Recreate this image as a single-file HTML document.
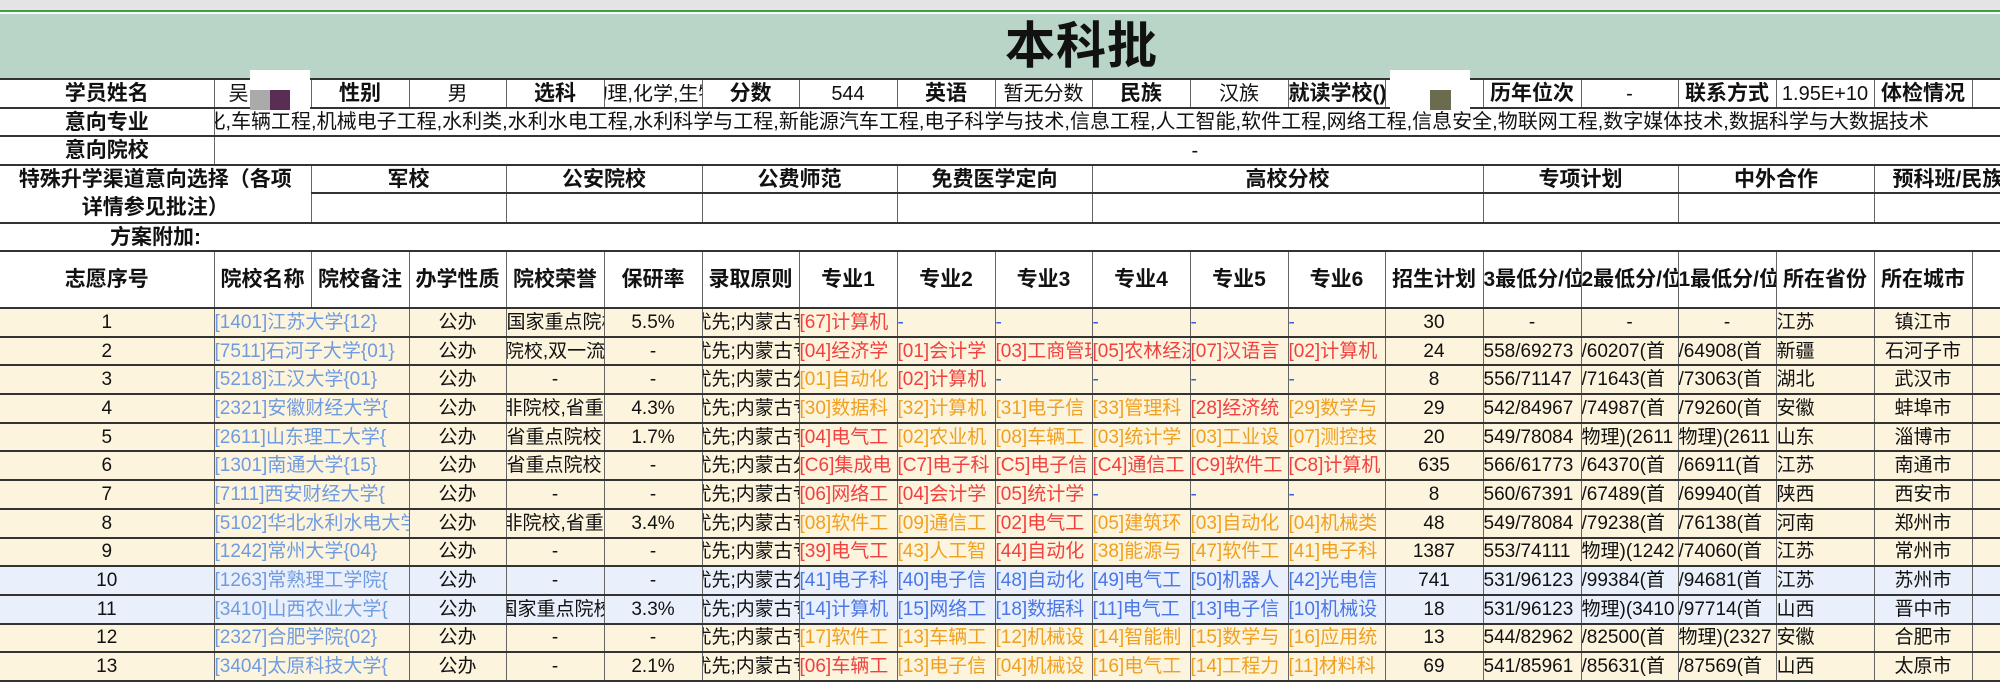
<!DOCTYPE html>
<html><head><meta charset="utf-8"><style>
*{margin:0;padding:0;box-sizing:border-box}
body{width:2000px;height:673px;overflow:hidden;background:#fff;font-family:"Liberation Sans","Noto Sans CJK SC",sans-serif;position:relative;line-height:1}
.colhdr{position:absolute;left:0;top:0;width:2000px;height:12px;background:#e4e4e4;border-bottom:2px solid #3fa046}
table{position:absolute;left:0;top:14px;border-collapse:collapse;table-layout:fixed;width:2030px}
td{border-right:1px solid #666;border-bottom:2px solid #333;white-space:nowrap;overflow:hidden;font-size:20px;line-height:1;text-align:center;color:#111;padding:0;vertical-align:middle}
td.b{font-weight:bold;font-size:21px}
.c{display:flex;justify-content:center;overflow:hidden}
.title{background:#b9d5c8;position:relative;border-bottom:2px solid #333}
tr.d td{height:28.7px;font-size:19px;background:#fdf4dd}
tr.bl td{background:#e9f0fc}
.nm{color:#6f9be0;text-align:left}
.r{color:#f04040;text-align:left}
.o{color:#f0a020;text-align:left}
.u{color:#4a76e6;text-align:left}
.dash{color:#2e5fe0;text-align:left}
.t{text-align:left}
</style></head><body>
<div class="colhdr"></div>
<table>
<colgroup><col style="width:214px">
<col style="width:97px"><col style="width:98px"><col style="width:97px"><col style="width:98px"><col style="width:98px"><col style="width:97px"><col style="width:98px"><col style="width:98px"><col style="width:97px"><col style="width:98px"><col style="width:98px"><col style="width:97px"><col style="width:98px"><col style="width:98px"><col style="width:97px"><col style="width:98px"><col style="width:98px"><col style="width:98px">
<col style="width:58px"></colgroup>
<tr><td colspan="20" class="title" style="height:65px;border-right:none"><span style="position:absolute;left:1005px;top:7px;font-size:50px;font-weight:bold;letter-spacing:1px">本科批</span></td></tr>
<tr style="height:29px"><td class="b">学员姓名</td><td style="text-align:left;padding-left:14px">吴</td><td class="b">性别</td><td>男</td><td class="b">选科</td><td><div class="c">物理,化学,生物</div></td><td class="b">分数</td><td>544</td><td class="b">英语</td><td>暂无分数</td><td class="b">民族</td><td>汉族</td><td class="b t">就读学校()</td><td></td><td class="b">历年位次</td><td>-</td><td class="b">联系方式</td><td>1.95E+10</td><td class="b">体检情况</td><td style="border-right:none"></td></tr>
<tr style="height:28px"><td class="b">意向专业</td><td colspan="19" style="text-align:left;overflow:hidden;border-right:none"><div style="margin-left:-9px">化,车辆工程,机械电子工程,水利类,水利水电工程,水利科学与工程,新能源汽车工程,电子科学与技术,信息工程,人工智能,软件工程,网络工程,信息安全,物联网工程,数字媒体技术,数据科学与大数据技术</div></td></tr>
<tr style="height:29px"><td class="b">意向院校</td><td colspan="19" style="border-right:none;text-align:left;padding-left:977px">-</td></tr>
<tr style="height:28px"><td colspan="2" rowspan="2" class="b" style="line-height:28px;text-align:center">特殊升学渠道意向选择（各项<br>详情参见批注）</td><td colspan="2" class="b">军校</td><td colspan="2" class="b">公安院校</td><td colspan="2" class="b">公费师范</td><td colspan="2" class="b">免费医学定向</td><td colspan="4" class="b">高校分校</td><td colspan="2" class="b">专项计划</td><td colspan="2" class="b">中外合作</td><td colspan="2" class="b t" style="padding-left:18px;border-right:none">预科班/民族班</td></tr>
<tr style="height:29px"><td colspan="2"></td><td colspan="2"></td><td colspan="2"></td><td colspan="2"></td><td colspan="4"></td><td colspan="2"></td><td colspan="2"></td><td colspan="2" style="border-right:none"></td></tr>
<tr style="height:28px"><td colspan="2" class="b" style="border-right:none">方案附加:</td><td colspan="18" style="border-right:none"></td></tr>
<tr style="height:57px"><td class="b">志愿序号</td><td class="b">院校名称</td><td class="b">院校备注</td><td class="b">办学性质</td><td class="b">院校荣誉</td><td class="b">保研率</td><td class="b">录取原则</td><td class="b">专业1</td><td class="b">专业2</td><td class="b">专业3</td><td class="b">专业4</td><td class="b">专业5</td><td class="b">专业6</td><td class="b">招生计划</td><td class="b t">3最低分/位次</td><td class="b t">2最低分/位次</td><td class="b t">1最低分/位次</td><td class="b">所在省份</td><td class="b">所在城市</td><td style="border-right:none"></td></tr>

<tr class="d"><td>1</td><td colspan="2" class="nm">[1401]江苏大学{12}</td><td>公办</td><td class="t">国家重点院校</td><td>5.5%</td><td class="t"><div style="margin-left:-10px">优先;内蒙古专项</div></td><td class="r">[67]计算机</td><td class="dash">-</td><td class="dash">-</td><td class="dash">-</td><td class="dash">-</td><td class="dash">-</td><td>30</td><td>-</td><td>-</td><td>-</td><td class="t">江苏</td><td>镇江市</td><td style="border-right:none"></td></tr>
<tr class="d"><td>2</td><td colspan="2" class="nm">[7511]石河子大学{01}</td><td>公办</td><td><div class="c">院校,双一流</div></td><td>-</td><td class="t"><div style="margin-left:-10px">优先;内蒙古专项</div></td><td class="r">[04]经济学</td><td class="r">[01]会计学</td><td class="r">[03]工商管理</td><td class="r">[05]农林经济</td><td class="r">[07]汉语言</td><td class="r">[02]计算机</td><td>24</td><td class="t">558/69273</td><td class="t">/60207(首</td><td class="t">/64908(首</td><td class="t">新疆</td><td>石河子市</td><td style="border-right:none"></td></tr>
<tr class="d"><td>3</td><td colspan="2" class="nm">[5218]江汉大学{01}</td><td>公办</td><td>-</td><td>-</td><td class="t"><div style="margin-left:-10px">优先;内蒙古分</div></td><td class="o">[01]自动化</td><td class="r">[02]计算机</td><td class="dash">-</td><td class="dash">-</td><td class="dash">-</td><td class="dash">-</td><td>8</td><td class="t">556/71147</td><td class="t">/71643(首</td><td class="t">/73063(首</td><td class="t">湖北</td><td>武汉市</td><td style="border-right:none"></td></tr>
<tr class="d"><td>4</td><td colspan="2" class="nm">[2321]安徽财经大学{</td><td>公办</td><td class="t"><div style="margin-left:-3px">非院校,省重点</div></td><td>4.3%</td><td class="t"><div style="margin-left:-10px">优先;内蒙古专项</div></td><td class="o">[30]数据科</td><td class="o">[32]计算机</td><td class="o">[31]电子信</td><td class="o">[33]管理科</td><td class="r">[28]经济统</td><td class="o">[29]数学与</td><td>29</td><td class="t">542/84967</td><td class="t">/74987(首</td><td class="t">/79260(首</td><td class="t">安徽</td><td>蚌埠市</td><td style="border-right:none"></td></tr>
<tr class="d"><td>5</td><td colspan="2" class="nm">[2611]山东理工大学{</td><td>公办</td><td class="t">省重点院校</td><td>1.7%</td><td class="t"><div style="margin-left:-10px">优先;内蒙古专项</div></td><td class="r">[04]电气工</td><td class="o">[02]农业机</td><td class="o">[08]车辆工</td><td class="o">[03]统计学</td><td class="o">[03]工业设</td><td class="o">[07]测控技</td><td>20</td><td class="t">549/78084</td><td class="t">物理)(2611</td><td class="t">物理)(2611</td><td class="t">山东</td><td>淄博市</td><td style="border-right:none"></td></tr>
<tr class="d"><td>6</td><td colspan="2" class="nm">[1301]南通大学{15}</td><td>公办</td><td class="t">省重点院校</td><td>-</td><td class="t"><div style="margin-left:-10px">优先;内蒙古分</div></td><td class="r">[C6]集成电</td><td class="r">[C7]电子科</td><td class="r">[C5]电子信</td><td class="r">[C4]通信工</td><td class="r">[C9]软件工</td><td class="r">[C8]计算机</td><td>635</td><td class="t">566/61773</td><td class="t">/64370(首</td><td class="t">/66911(首</td><td class="t">江苏</td><td>南通市</td><td style="border-right:none"></td></tr>
<tr class="d"><td>7</td><td colspan="2" class="nm">[7111]西安财经大学{</td><td>公办</td><td>-</td><td>-</td><td class="t"><div style="margin-left:-10px">优先;内蒙古专项</div></td><td class="r">[06]网络工</td><td class="r">[04]会计学</td><td class="r">[05]统计学</td><td class="dash">-</td><td class="dash">-</td><td class="dash">-</td><td>8</td><td class="t">560/67391</td><td class="t">/67489(首</td><td class="t">/69940(首</td><td class="t">陕西</td><td>西安市</td><td style="border-right:none"></td></tr>
<tr class="d"><td>8</td><td colspan="2" class="nm">[5102]华北水利水电大学</td><td>公办</td><td class="t"><div style="margin-left:-3px">非院校,省重点</div></td><td>3.4%</td><td class="t"><div style="margin-left:-10px">优先;内蒙古专项</div></td><td class="o">[08]软件工</td><td class="o">[09]通信工</td><td class="r">[02]电气工</td><td class="o">[05]建筑环</td><td class="o">[03]自动化</td><td class="o">[04]机械类</td><td>48</td><td class="t">549/78084</td><td class="t">/79238(首</td><td class="t">/76138(首</td><td class="t">河南</td><td>郑州市</td><td style="border-right:none"></td></tr>
<tr class="d"><td>9</td><td colspan="2" class="nm">[1242]常州大学{04}</td><td>公办</td><td>-</td><td>-</td><td class="t"><div style="margin-left:-10px">优先;内蒙古专项</div></td><td class="r">[39]电气工</td><td class="o">[43]人工智</td><td class="r">[44]自动化</td><td class="o">[38]能源与</td><td class="o">[47]软件工</td><td class="o">[41]电子科</td><td>1387</td><td class="t">553/74111</td><td class="t">物理)(1242</td><td class="t">/74060(首</td><td class="t">江苏</td><td>常州市</td><td style="border-right:none"></td></tr>
<tr class="d bl"><td>10</td><td colspan="2" class="nm">[1263]常熟理工学院{</td><td>公办</td><td>-</td><td>-</td><td class="t"><div style="margin-left:-10px">优先;内蒙古分</div></td><td class="u">[41]电子科</td><td class="u">[40]电子信</td><td class="u">[48]自动化</td><td class="u">[49]电气工</td><td class="u">[50]机器人</td><td class="u">[42]光电信</td><td>741</td><td class="t">531/96123</td><td class="t">/99384(首</td><td class="t">/94681(首</td><td class="t">江苏</td><td>苏州市</td><td style="border-right:none"></td></tr>
<tr class="d bl"><td>11</td><td colspan="2" class="nm">[3410]山西农业大学{</td><td>公办</td><td class="t"><div style="margin-left:-8px">国家重点院校</div></td><td>3.3%</td><td class="t"><div style="margin-left:-10px">优先;内蒙古专项</div></td><td class="u">[14]计算机</td><td class="u">[15]网络工</td><td class="u">[18]数据科</td><td class="u">[11]电气工</td><td class="u">[13]电子信</td><td class="u">[10]机械设</td><td>18</td><td class="t">531/96123</td><td class="t">物理)(3410</td><td class="t">/97714(首</td><td class="t">山西</td><td>晋中市</td><td style="border-right:none"></td></tr>
<tr class="d"><td>12</td><td colspan="2" class="nm">[2327]合肥学院{02}</td><td>公办</td><td>-</td><td>-</td><td class="t"><div style="margin-left:-10px">优先;内蒙古专项</div></td><td class="o">[17]软件工</td><td class="o">[13]车辆工</td><td class="o">[12]机械设</td><td class="o">[14]智能制</td><td class="o">[15]数学与</td><td class="o">[16]应用统</td><td>13</td><td class="t">544/82962</td><td class="t">/82500(首</td><td class="t">物理)(2327</td><td class="t">安徽</td><td>合肥市</td><td style="border-right:none"></td></tr>
<tr class="d"><td>13</td><td colspan="2" class="nm">[3404]太原科技大学{</td><td>公办</td><td>-</td><td>2.1%</td><td class="t"><div style="margin-left:-10px">优先;内蒙古专项</div></td><td class="r">[06]车辆工</td><td class="o">[13]电子信</td><td class="o">[04]机械设</td><td class="o">[16]电气工</td><td class="o">[14]工程力</td><td class="o">[11]材料科</td><td>69</td><td class="t">541/85961</td><td class="t">/85631(首</td><td class="t">/87569(首</td><td class="t">山西</td><td>太原市</td><td style="border-right:none"></td></tr>
</table>
<div style="position:absolute;left:250px;top:70px;width:60px;height:40px;background:#fff"></div>
<div style="position:absolute;left:250px;top:90px;width:20px;height:20px;background:#aaa"></div>
<div style="position:absolute;left:270px;top:90px;width:20px;height:20px;background:#5a2d55"></div>
<div style="position:absolute;left:1390px;top:70px;width:80px;height:40px;background:#fff"></div>
<div style="position:absolute;left:1430px;top:90px;width:21px;height:20px;background:#6b6b50"></div>
</body></html>
